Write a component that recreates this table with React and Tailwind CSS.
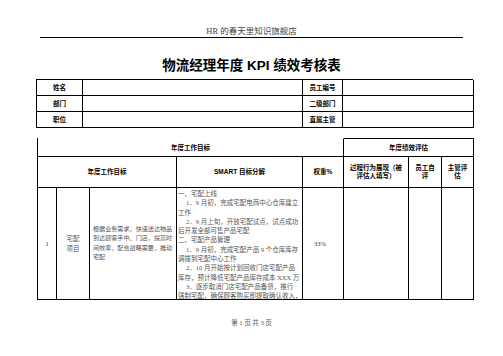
const cjk = "font-['Liberation_Serif','Noto_Sans_CJK_SC',serif]";
const bold = "font-['Liberation_Sans','Noto_Sans_CJK_SC',sans-serif] font-bold text-black";

const smartLines = [
  { t: '一、宅配上线' },
  { t: '1．9 月初，完成宅配电商中心仓库建立', i: true },
  { t: '工作' },
  { t: '2．9 月上旬，开放宅配试点，试点成功', i: true },
  { t: '后开发全部可售产品宅配' },
  { t: '二、宅配产品管理' },
  { t: '1．9 月初，完成宅配产品 9 个仓库库存', i: true },
  { t: '调拨到宅配中心工作' },
  { t: '2．10 月开始按计划回收门店宅配产品', i: true },
  { t: '库存，预计降低宅配产品库存成本 XXX 万' },
  { t: '3．逐步取消门店宅配产品备货，推行', i: true },
  { t: '强制宅配，确保顾客购买即提取确认收入，' },
];

const Label = ({ children, className = '' }) => (
  <div className={`flex items-center justify-center text-center border-r border-b border-black text-[6.5px] leading-[8px] ${bold} ${className}`}>
    {children}
  </div>
);

const Blank = ({ className = '' }) => <div className={`border-r border-b border-black ${className}`}></div>;

const App = () => {
  return (
    <div className={`w-[503px] h-[356px] bg-white overflow-hidden ${cjk}`}>
      {/* Running header */}
      <div className="pt-[26px] text-center text-[8.5px] leading-[10px] text-[#444]">HR 的春天里知识旗舰店</div>
      <div className="ml-[40px] w-[423px] h-px bg-black mt-[1px]"></div>

      {/* Title */}
      <h1 className={`mt-[20px] text-center text-[13.5px] leading-[16px] ${bold}`}>
        物流经理年度 KPI 绩效考核表
      </h1>

      {/* Employee info */}
      <div className="mt-[5px] ml-[36px] w-[437px] grid grid-cols-[46px_220px_40px_131px] grid-rows-[16px_16px_16px] border-t border-l border-black">
        <Label>姓名</Label>
        <Blank />
        <Label>员工编号</Label>
        <Blank />
        <Label>部门</Label>
        <Blank />
        <Label>二级部门</Label>
        <Blank />
        <Label>职位</Label>
        <Blank />
        <Label>直属主管</Label>
        <Blank />
      </div>

      {/* Goals table */}
      <div className="mt-[10px] ml-[37px] w-[436px] grid grid-cols-[19px_33px_87px_126px_41px_65px_33px_32px] grid-rows-[19px_31px_112px] border-l border-black">
        <Label className="col-span-5 border-t border-t-transparent">年度工作目标</Label>
        <Label className="col-span-3 border-t">年度绩效评估</Label>

        <Label className="col-span-3">年度工作目标</Label>
        <Label>SMART 目标分解</Label>
        <Label>权重%</Label>
        <Label>过程行为展现（被<br />评估人填写）</Label>
        <Label>员工自<br />评</Label>
        <Label>主管评<br />估</Label>

        <div className="flex items-center justify-center border-r border-b border-black text-[6.5px] text-[#333]">1</div>
        <div className="flex items-center justify-center text-center border-r border-b border-black text-[6.5px] leading-[9.3px] text-[#555]">
          宅配<br />项目
        </div>
        <div className="flex items-center border-r border-b border-black pl-[3px] overflow-hidden text-[6.1px] leading-[9.3px] text-[#555]">
          <div className="whitespace-nowrap">
            <div>根据业务需求，快速送达物品</div>
            <div>到达顾客手中、门店，提高时</div>
            <div>间效率，配合战略需要，推动</div>
            <div>宅配</div>
          </div>
        </div>
        <div className="border-r border-b border-black pt-[1px] pl-[1px] overflow-hidden text-[6.5px] leading-[9.3px] text-[#555]">
          {smartLines.map((l, k) => (
            <div key={k} className={`whitespace-nowrap ${l.i ? 'pl-[8px]' : ''}`}>{l.t}</div>
          ))}
        </div>
        <div className="flex items-center justify-center border-r border-b border-black text-[6.5px] text-[#333] pr-[6px]">33%</div>
        <Blank />
        <Blank />
        <Blank />
      </div>

      {/* Footer */}
      <div className="mt-[18px] text-center text-[6.5px] leading-[10px] text-[#555]">第 1 页 共 3 页</div>
    </div>
  );
};

export default App;
